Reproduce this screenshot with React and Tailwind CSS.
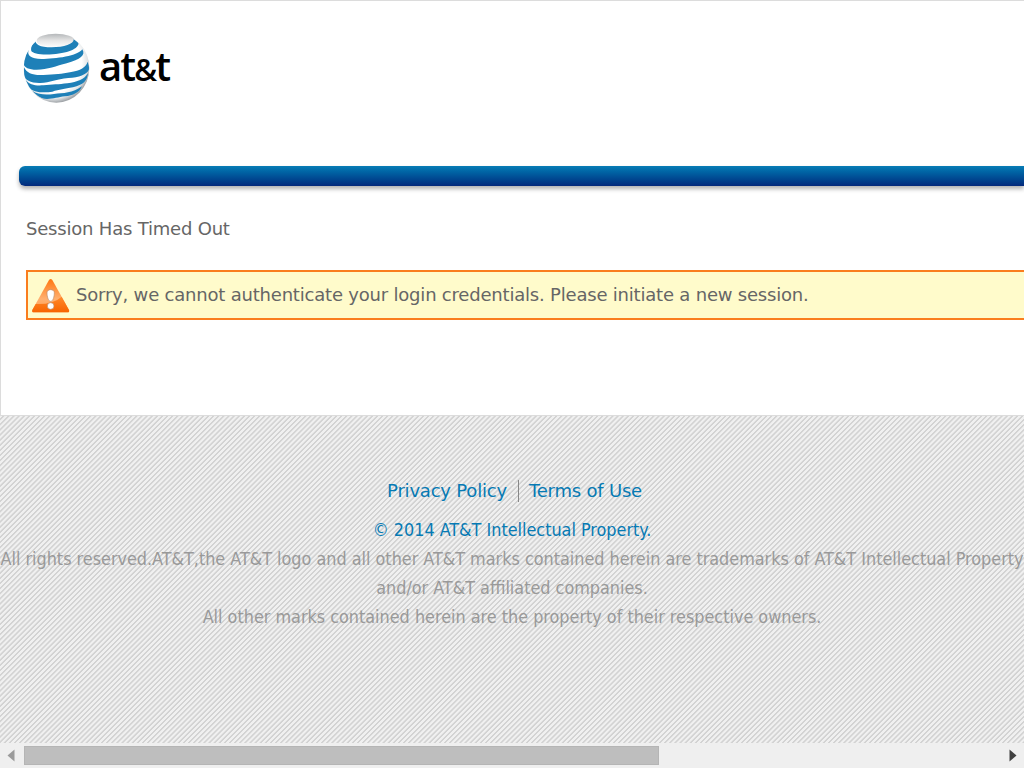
import React from "react";

function Globe() {
  return (
    <svg className="h-[72px] w-[70px] shrink-0" viewBox="6 9 210 216">
      <defs>
        <radialGradient id="ball" cx=".45" cy=".42" r=".58">
          <stop offset=".75" stopColor="#fff" />
          <stop offset=".9" stopColor="#e2e5e7" />
          <stop offset="1" stopColor="#a2a6aa" />
        </radialGradient>
        <linearGradient id="cap" x1="0" y1="0" x2="0" y2="1">
          <stop offset="0" stopColor="#b4b7b9" />
          <stop offset=".5" stopColor="#e6e6e6" />
          <stop offset="1" stopColor="#fff" />
        </linearGradient>
        <clipPath id="disc"><ellipse cx="109" cy="114" rx="98" ry="102" /></clipPath>
      </defs>
      <ellipse cx="109" cy="114" rx="99" ry="104" fill="url(#ball)" />
      <ellipse cx="107" cy="32" rx="57" ry="21" fill="url(#cap)" />
      <g clipPath="url(#disc)" fill="#1e80b8">
        <path d="M48 29C42 42 60 52 95 52C132 52 162 42 161 28L175 37C180 52 152 69 98 73C62 76 38 70 34 63C31 50 39 38 48 29Z" />
        <path d="M26 60C20 77 34 86 64 87C107 87 174 78 187 58C198 76 181 89 140 100C109 108 83 119 50 119C26 119 13 112 10 101C10 81 17 70 26 60Z" />
        <path d="M12 112C20 130 40 137 70 135C105 133 126 132 150 127C182 121 198 112 203 95L209 113C205 132 182 141 145 144C108 147 91 158 61 159C34 160 13 149 10 135Z" />
        <path d="M17 150C28 164 46 168 70 166C98 164 116 163 142 160C173 156 193 148 204 130C202 152 190 165 159 172C134 177 118 178 97 185C69 190 39 186 25 173Z" />
        <path d="M37 183C57 195 79 195 102 192C130 189 158 190 186 169C178 188 159 197 135 199C114 201 102 207 81 207C62 205 47 198 37 183Z" />
      </g>
    </svg>
  );
}

function Warning() {
  return (
    <svg className="h-[36px] w-[39px] shrink-0" viewBox="9 15 117 108">
      <defs>
        <linearGradient id="orange" x1="0" y1="0" x2="0" y2="1">
          <stop offset="0" stopColor="#ff7610" />
          <stop offset=".6" stopColor="#ffb070" />
          <stop offset="1" stopColor="#ff9d50" />
        </linearGradient>
        <linearGradient id="base" x1="0" y1="0" x2="0" y2="1">
          <stop offset="0" stopColor="#ff8a2c" />
          <stop offset="1" stopColor="#f86400" />
        </linearGradient>
      </defs>
      <path d="M63 24Q68 18 73 24L123 114Q125 121 119 121H17Q11 121 13 114Z" fill="url(#orange)" />
      <path d="M23 96Q75 98 101 74L123 114Q125 121 119 121H17Q11 121 13 114Z" fill="url(#base)" />
      <path d="M57 62C57 50 79 50 79 62C79 74 75 88 68 88S57 74 57 62Z" fill="#fff" stroke="#b98c6d" strokeWidth="2" />
      <circle cx="68" cy="102" r="10" fill="#fff" stroke="#b98c6d" strokeWidth="2" />
    </svg>
  );
}

export default function App() {
  return (
    <div className="flex h-[768px] w-[1024px] flex-col overflow-hidden whitespace-nowrap bg-[#efefef] font-['DejaVu_Sans',sans-serif] text-[18px] tracking-[-0.2px] text-[#666]">
      <main className="flex h-[416px] shrink-0 flex-col border-y border-l border-[#dcdcdc] bg-white">
        <header className="flex h-[165px] shrink-0 items-start pl-[21px] pt-[32px]">
          <Globe />
          <span className="ml-[7px] mt-[8px] font-['Open_Sans',sans-serif] text-[40px] font-semibold leading-[50px] tracking-[-1.9px] text-black">at<span className="text-[31px]">&amp;</span>t</span>
        </header>
        <div className="ml-[18px] h-[20px] shrink-0 rounded-l-[6px] bg-linear-to-b from-[#087cb5] to-[#04297c] shadow-[0_3px_4px_rgba(0,0,0,0.3)]" />
        <h1 className="ml-[25px] mt-[30px] h-[25px] shrink-0 leading-[25px]"><span>Session Has Timed Out</span></h1>
        <div className="ml-[25px] mt-[29px] flex h-[50px] shrink-0 items-center border-y-2 border-l-2 border-[#fa7d1e] bg-[#fffbcb] pl-[3px]">
          <Warning />
          <p className="ml-[6px] leading-[24px]">Sorry, we cannot authenticate your login credentials. Please initiate a new session.</p>
        </div>
      </main>
      <footer className="flex h-[327px] shrink-0 flex-col items-center bg-[repeating-linear-gradient(135deg,#f0f0f0_0px,#f0f0f0_1.5px,#d3d3d3_2.1px,#d3d3d3_3.1px,#f0f0f0_3.62px)] pt-[63px] text-[#999]">
        <nav className="ml-[5px] flex h-[24px] items-center text-[#067ab4]">
          <a className="leading-[24px]">Privacy Policy</a>
          <i className="ml-[11px] mr-[10px] h-[22px] w-px bg-[#888]" />
          <a className="leading-[24px]">Terms of Use</a>
        </nav>
        <div className="mt-[12px] flex flex-col items-center font-['DejaVu_Sans_Condensed','DejaVu_Sans',sans-serif] text-[17.83px] leading-[29px] tracking-normal">
          <p className="text-[#067ab4]">© 2014 AT&amp;T Intellectual Property.</p>
          <p>All rights reserved.AT&amp;T,the AT&amp;T logo and all other AT&amp;T marks contained herein are trademarks of AT&amp;T Intellectual Property</p>
          <p>and/or AT&amp;T affiliated companies.</p>
          <p>All other marks contained herein are the property of their respective owners.</p>
        </div>
      </footer>
      <div className="flex h-[25px] shrink-0 items-center bg-[#efefef]">
        <svg className="ml-[7px] h-[13px] w-[8px]" viewBox="0 0 8 13"><path d="M7.5.5v12L.5 6.5Z" fill="#9b9b9b" /></svg>
        <div className="ml-[9px] h-[19px] w-[635px] border border-[#b5b5b5] bg-[#bebebe]" />
        <svg className="ml-auto mr-[7px] h-[13px] w-[8px]" viewBox="0 0 8 13"><path d="M.5.5v12l7-6Z" fill="#404040" /></svg>
      </div>
    </div>
  );
}
